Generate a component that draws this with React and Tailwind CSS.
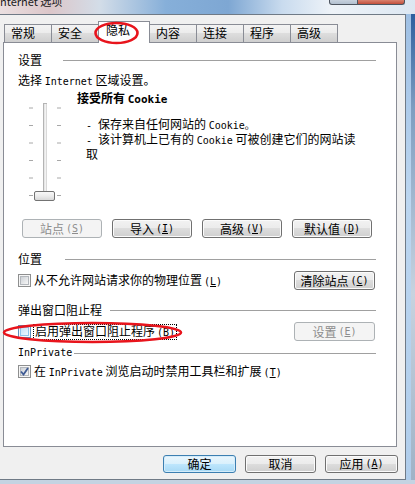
import React from "react";

// half-width latin, like SimSun's ascii
const L = ({ children, className = "" }) => (
  <span className={`font-['DejaVu_Sans_Mono','Noto_Sans_CJK_SC',monospace] text-[10px] ${className}`}>{children}</span>
);

const Key = ({ k }) => (
  <L className="pl-[2px]">
    (<span className="underline">{k}</span>)
  </L>
);

const Btn = ({ children, disabled, primary, className = "" }) => {
  let skin =
    "border-[#707070] bg-[linear-gradient(#f2f2f2_0%,#ebebeb_50%,#dddddd_50%,#cfcfcf_100%)] shadow-[inset_0_0_0_1px_#fbfbfb] text-black";
  if (primary)
    skin =
      "border-[#3c7fb1] bg-[linear-gradient(#eaf6fd_0%,#d9f0fc_50%,#bee6fd_50%,#a7d9f5_100%)] shadow-[inset_0_0_0_1px_#d4ecfa] text-black";
  if (disabled) skin = "border-[#adb2b5] bg-[#f4f4f4] text-[#8d8d8d]";
  return (
    <div className={`flex items-center justify-center rounded-[3px] border leading-[12px] ${skin} ${className}`}>
      {children}
    </div>
  );
};

const Check = ({ checked, hot }) => (
  <span
    className={`relative flex h-[13px] w-[13px] shrink-0 items-center justify-center border bg-[#f6f6f6] ${
      hot ? "border-[#5b8fbd]" : "border-[#8e8f8f]"
    }`}
  >
    <span
      className={`h-[9px] w-[9px] border ${
        hot
          ? "border-[#8cc3ea] bg-[linear-gradient(135deg,#c4e2f7,#eef8fe)]"
          : "border-[#b3b7bc] bg-[linear-gradient(135deg,#cdd1d6,#f7f7f7)]"
      }`}
    />
    {checked && (
      <svg className="absolute left-0 top-0" width="11" height="11" viewBox="0 0 11 11">
        <path d="M2 5.5 L4.5 8.5 L9 2" fill="none" stroke="#3f5b94" strokeWidth="1.8" />
      </svg>
    )}
  </span>
);

const Group = ({ label, gap }) => (
  <div className="flex h-[14px] items-center leading-[14px]">
    <span className="whitespace-nowrap">{label}</span>
    <div className={`h-px flex-1 bg-[#a0a0a0] ${gap}`} />
  </div>
);

const Tab = ({ label, active }) =>
  active ? (
    <div className="relative z-10 -mb-px -ml-px h-[22px] w-[52px] border-x border-t border-[#898c95] bg-white pl-[7px] pt-px leading-[14px]">
      {label}
    </div>
  ) : (
    <div className="-ml-px h-[18px] w-[48px] border-x border-t border-[#898c95] bg-[linear-gradient(#f3f3f3_0%,#ebebeb_50%,#dddddd_50%,#cfcfcf_100%)] pl-[6px] pt-px leading-[14px] first:ml-0">
      {label}
    </div>
  );

const Slider = () => {
  const ticks = [17, 34.5, 52, 69.5, 87, 104.5];
  return (
    <svg width="34" height="110" viewBox="0 0 34 110" className="shrink-0">
      {ticks.map((y) => (
        <g key={y} stroke="#a8a8a8" strokeWidth="1">
          <line x1="0" x2="4" y1={y} y2={y} />
          <line x1="28" x2="32" y1={y} y2={y} />
        </g>
      ))}
      <rect x="14.5" y="12.5" width="3" height="93" fill="#e7e7e7" stroke="#b4b4b4" />
      <line x1="17" x2="17" y1="13" y2="105" stroke="#fdfdfd" />
      <defs>
        <linearGradient id="th" x1="0" y1="0" x2="0" y2="1">
          <stop offset="0" stopColor="#fafafa" />
          <stop offset="0.5" stopColor="#ececec" />
          <stop offset="1" stopColor="#d6d6d6" />
        </linearGradient>
      </defs>
      <rect x="5.5" y="100.5" width="20" height="9" rx="1.5" fill="url(#th)" stroke="#737373" />
    </svg>
  );
};

export default function App() {
  return (
    <div className="relative h-[484px] w-[415px] overflow-hidden bg-[#c4d3e2] font-['Noto_Sans_CJK_SC',sans-serif] text-[12px] text-black">
      {/* glass title bar */}
      <div className="flex h-[14px] items-start bg-[linear-gradient(90deg,#eadfe0_0%,#dcc6c9_12%,#d3dde8_24%,#86afd9_40%,#7ea7d3_55%,#c9dbee_68%,#eef3f8_80%,#dce7f2_100%)]">
        <span className="-mt-[6px] whitespace-nowrap text-[11px] leading-[14px] text-[#1b1b1b]">nternet 选项</span>
        <div className="ml-auto flex">
          <div className="h-[5px] w-[29px] rounded-bl-[3px] border-x border-b border-[#4d5560] bg-[linear-gradient(#c7d2de,#b2c0cf)]" />
          <div className="h-[5px] w-[47px] rounded-br-[3px] border-b border-r border-[#4d5560] bg-[linear-gradient(#d9826f,#c2503c)]" />
        </div>
        <div className="w-[10px]" />
      </div>

      <div className="flex">
        {/* dialog */}
        <div className="flex h-[466px] w-[406px] flex-col border-y border-r border-[#6f7a86] bg-[#f0f0f0]">
          <div className="ml-[4px] mt-[6px] flex h-[21px] items-end">
            <Tab label="常规" />
            <Tab label="安全" />
            <Tab label="隐私" active />
            <Tab label="内容" />
            <Tab label="连接" />
            <Tab label="程序" />
            <Tab label="高级" />
          </div>

          <div className="ml-[3px] flex h-[405px] w-[394px] flex-col border border-[#898c95] bg-white pl-[14px] pr-[20px]">
            <div className="mt-[10px]">
              <Group label="设置" gap="ml-[21px]" />
            </div>
            <div className="mt-[6px] leading-[14px]">
              选择 <L>Internet</L> 区域设置。
            </div>

            <div className="mt-[2px] flex">
              <div className="ml-[11px]">
                <Slider />
              </div>
              <div className="ml-[14px]">
                <div className="font-bold leading-[14px]">
                  接受所有 <L className="text-[11px]">Cookie</L>
                </div>
                <div className="mt-[10px] whitespace-nowrap pl-[9px] leading-[13px]">
                  <div>
                    <L>- </L>保存来自任何网站的 <L>Cookie。</L>
                  </div>
                  <div>
                    <L>- </L>该计算机上已有的 <L>Cookie</L> 可被创建它们的网站读
                  </div>
                  <div>取</div>
                </div>
              </div>
            </div>

            <div className="ml-[4px] mt-[18px] flex gap-[10px]">
              <Btn disabled className="h-[19px] w-[80px]">
                站点<Key k="S" />
              </Btn>
              <Btn className="h-[19px] w-[80px]">
                导入<Key k="I" />
              </Btn>
              <Btn className="h-[19px] w-[80px]">
                高级<Key k="V" />
              </Btn>
              <Btn className="h-[19px] w-[80px]">
                默认值<Key k="D" />
              </Btn>
            </div>

            <div className="mt-[14px]">
              <Group label="位置" gap="ml-[23px]" />
            </div>
            <div className="mt-[5px] flex h-[19px] items-center">
              <Check />
              <span className="ml-[3px] leading-[14px]">
                从不允许网站请求你的物理位置<Key k="L" />
              </span>
              <Btn className="ml-auto mr-[1px] h-[19px] w-[81px]">
                清除站点<Key k="C" />
              </Btn>
            </div>

            <div className="mt-[13px]">
              <Group label="弹出窗口阻止程" gap="ml-[8px]" />
            </div>
            <div className="mt-[5px] flex h-[19px] items-center">
              <Check hot />
              <span className="ml-[2px] border border-dotted border-black px-px leading-[12px]">
                启用弹出窗口阻止程序<Key k="B" />
              </span>
              <Btn disabled className="ml-auto mr-[1px] h-[19px] w-[81px]">
                设置<Key k="E" />
              </Btn>
            </div>

            <div className="mt-[5px] flex h-[14px] items-center">
              <L className="leading-[14px]">InPrivate</L>
              <div className="ml-[2px] h-px flex-1 bg-[#a0a0a0]" />
            </div>
            <div className="mt-[4px] flex h-[15px] items-center">
              <Check checked />
              <span className="ml-[3px] leading-[14px]">
                在 <L>InPrivate</L> 浏览启动时禁用工具栏和扩展<Key k="T" />
              </span>
            </div>
          </div>

          <div className="mt-[8px] flex justify-end gap-[9px] pr-[7px]">
            <Btn primary className="h-[18px] w-[73px]">
              确定
            </Btn>
            <Btn className="h-[18px] w-[71px]">取消</Btn>
            <Btn className="h-[18px] w-[73px]">
              应用<Key k="A" />
            </Btn>
          </div>
        </div>

        {/* window frame, right edge */}
        <div className="flex h-[466px] w-[9px]">
          <div className="w-[5px] bg-[linear-gradient(#9fc0e4,#bcd6f0_40%,#b0cdeb)]" />
          <div className="w-[4px] bg-[linear-gradient(#2d5f9e,#7d9dc0_20%,#c7d3df_60%,#9fb2c6)]" />
        </div>
      </div>

      {/* red annotation marks */}
      <svg className="pointer-events-none absolute left-0 top-0 z-20" width="415" height="484">
        <ellipse cx="116.5" cy="33" rx="21" ry="10" fill="none" stroke="#e8141c" strokeWidth="2.6" />
        <ellipse cx="92.5" cy="332.5" rx="88.5" ry="9.5" fill="none" stroke="#e8141c" strokeWidth="2.6" />
      </svg>
    </div>
  );
}
